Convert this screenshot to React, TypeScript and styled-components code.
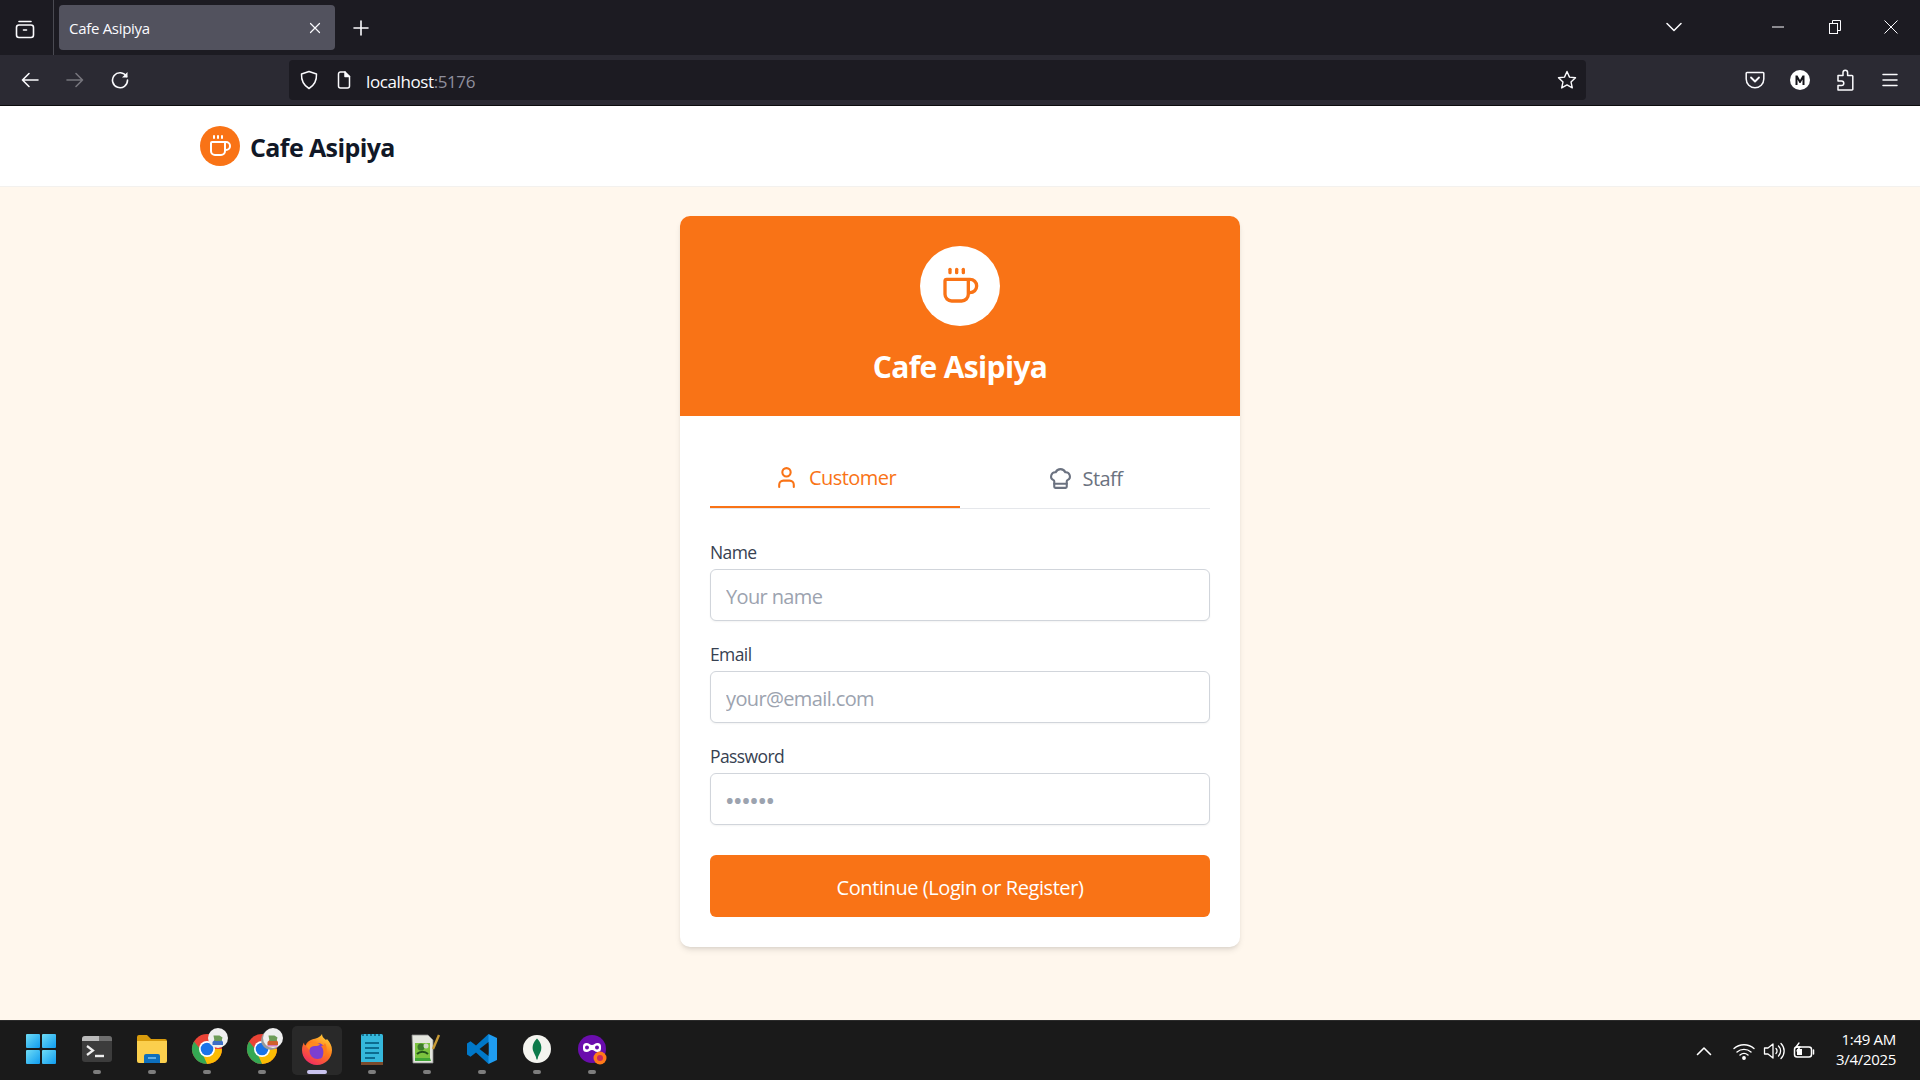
import { createGlobalStyle, styled } from "styled-components";
import { ChefHat, Coffee, User } from "lucide-react";

const GlobalStyle = createGlobalStyle`
  html, body {
    margin: 0;
    padding: 0;
    overflow: hidden;
  }
  body {
    font-family: "Open Sans", "Noto Sans", "Liberation Sans", sans-serif;
  }
  * {
    box-sizing: border-box;
  }
`;

const Screen = styled.div`
  width: 1920px;
  height: 1080px;
  display: flex;
  flex-direction: column;
  background: #fff7ed;
`;

/* browser chrome */
const TabStrip = styled.div`
  height: 55px;
  background: #1c1b22;
  display: flex;
  align-items: stretch;
  color: #fbfbfe;
`;

const TabManager = styled.div`
  width: 54px;
  border-right: 1px solid #4a4a52;
  display: flex;
  align-items: center;
  justify-content: center;
  padding: 2px 3px 0 0;
`;

const Tab = styled.div`
  width: 276px;
  height: 45px;
  margin: 5px 0 0 5px;
  padding: 1px 14px 0 10px;
  border-radius: 4px;
  background: #52525e;
  display: flex;
  align-items: center;
  justify-content: space-between;
  font-size: 15px;
  letter-spacing: -0.3px;
`;

const NewTab = styled.div`
  width: 52px;
  display: flex;
  align-items: center;
  justify-content: center;
`;

const StripSpacer = styled.div`
  flex: 1;
`;

const WindowGap = styled.div`
  width: 45px;
`;

const WindowButton = styled.div<{ $w: number }>`
  width: ${(p) => p.$w}px;
  display: flex;
  align-items: center;
  justify-content: center;
  padding-bottom: 1px;
`;

const Toolbar = styled.div`
  height: 51px;
  background: #2b2a33;
  border-bottom: 1px solid #0c0c0d;
  display: flex;
  align-items: center;
  padding: 0 7px;
  color: #fbfbfe;
`;

const ToolButton = styled.div<{ $dim?: boolean }>`
  width: 45px;
  display: flex;
  align-items: center;
  justify-content: center;
  color: ${(p) => (p.$dim ? "#76757c" : "#fbfbfe")};
`;

const UrlBar = styled.div`
  width: 1297px;
  height: 40px;
  margin: 0 146px 0 147px;
  padding: 0 9px 0 10px;
  border-radius: 4px;
  background: #1c1b22;
  display: flex;
  align-items: center;
  gap: 16px;
`;

const UrlText = styled.div`
  flex: 1;
  margin-left: -3px;
  padding-top: 3px;
  font-size: 17px;
  letter-spacing: -0.4px;
  color: #fbfbfe;
  span {
    color: #8f8f9d;
  }
`;

/* page */
const TopBar = styled.header`
  height: 81px;
  flex-shrink: 0;
  background: #fff;
  border-bottom: 1px solid #f3f1ee;
  padding-left: 200px;
  display: flex;
  align-items: center;
  gap: 10px;
`;

const BrandDot = styled.div`
  width: 40px;
  height: 40px;
  border-radius: 50%;
  background: #f97316;
  color: #fff;
  display: flex;
  align-items: center;
  justify-content: center;
`;

const BrandName = styled.div`
  padding-top: 2px;
  font-size: 25px;
  font-weight: 700;
  letter-spacing: -0.6px;
  color: #111827;
`;

const Main = styled.main`
  flex: 1;
  display: flex;
  justify-content: center;
  align-items: flex-start;
  padding-top: 29px;
`;

const Card = styled.div`
  width: 560px;
  border-radius: 10px;
  background: #fff;
  box-shadow: 0 4px 6px -1px rgba(0, 0, 0, 0.1), 0 2px 4px -2px rgba(0, 0, 0, 0.1);
  overflow: hidden;
`;

const Banner = styled.div`
  height: 200px;
  background: #f97316;
  padding-top: 30px;
  display: flex;
  flex-direction: column;
  align-items: center;
  gap: 21px;
`;

const BannerDot = styled.div`
  width: 80px;
  height: 80px;
  border-radius: 50%;
  background: #fff;
  color: #f97316;
  display: flex;
  align-items: center;
  justify-content: center;
`;

const BannerTitle = styled.h1`
  margin: 0;
  font-size: 30px;
  line-height: 40px;
  font-weight: 700;
  letter-spacing: -0.66px;
  color: #fff;
`;

const CardBody = styled.div`
  padding: 30px;
`;

const Tabs = styled.div`
  display: flex;
  height: 63px;
  border-bottom: 1px solid #e5e7eb;
  margin-bottom: 30px;
`;

const TabButton = styled.div<{ $active?: boolean }>`
  flex: 1;
  height: 62px;
  display: flex;
  align-items: center;
  justify-content: center;
  gap: 10px;
  padding-top: 2px;
  font-size: 20px;
  letter-spacing: -0.55px;
  color: ${(p) => (p.$active ? "#f97316" : "#6b7280")};
  border-bottom: ${(p) => (p.$active ? "2px solid #f97316" : "none")};
`;

const Field = styled.div`
  margin-bottom: 20px;
`;

const Label = styled.label`
  display: block;
  height: 26px;
  margin-bottom: 4px;
  font-size: 17.5px;
  line-height: 26px;
  letter-spacing: -0.6px;
  color: #374151;
`;

const Input = styled.input`
  display: block;
  width: 100%;
  height: 52px;
  padding: 2px 15px 0;
  border: 1px solid #d1d5db;
  border-radius: 6px;
  box-shadow: 0 1px 2px rgba(0, 0, 0, 0.05);
  background: #fff;
  font-family: inherit;
  font-size: 20px;
  letter-spacing: -0.63px;
  outline: none;
  &::placeholder {
    color: #9ca3af;
    opacity: 1;
  }
`;

const PasswordInput = styled(Input)`
  letter-spacing: 0.6px;
  &::placeholder {
    font-weight: 700;
  }
`;

const Submit = styled.button`
  display: block;
  width: 100%;
  height: 62px;
  margin-top: 30px;
  padding-top: 3px;
  border: none;
  border-radius: 6px;
  background: #f97316;
  color: #fff;
  font-family: inherit;
  font-size: 20px;
  letter-spacing: -0.42px;
`;

/* windows taskbar */
const Taskbar = styled.div`
  height: 60px;
  flex-shrink: 0;
  background: #1a1a1a;
  border-top: 1px solid #2b2b2b;
  display: flex;
  align-items: center;
  padding-left: 13px;
  color: #fff;
`;

const TaskCell = styled.div<{ $active?: boolean; $first?: boolean }>`
  width: ${(p) => (p.$active ? 50 : 55)}px;
  height: 49px;
  margin: 0 ${(p) => (p.$first ? 1 : p.$active ? 2.5 : 0)}px 0 ${(p) => (p.$active ? 2.5 : 0)}px;
  border-radius: 5px;
  position: relative;
  display: flex;
  align-items: center;
  justify-content: center;
  padding-bottom: 4px;
  background: ${(p) => (p.$active ? "#292929" : "transparent")};
  svg {
    overflow: visible;
  }
`;

const TaskDot = styled.span<{ $active?: boolean }>`
  position: absolute;
  bottom: 1px;
  left: 50%;
  transform: translateX(-50%);
  width: ${(p) => (p.$active ? 20 : 8)}px;
  height: 4px;
  border-radius: 2px;
  background: ${(p) => (p.$active ? "#c9c3ef" : "#7d7d7d")};
`;

const Tray = styled.div`
  margin-left: auto;
  display: flex;
  align-items: center;
`;

const TrayIcon = styled.div<{ $gap?: number }>`
  width: 30px;
  margin-left: ${(p) => p.$gap ?? 0}px;
  display: flex;
  align-items: center;
  justify-content: center;
`;

const Clock = styled.div`
  margin: 0 24px 4px 15px;
  width: 62px;
  text-align: right;
  white-space: nowrap;
  font-size: 15px;
  line-height: 20px;
  letter-spacing: -0.3px;
`;

const iconProps = {
  fill: "none",
  stroke: "currentColor",
  strokeLinecap: "round" as const,
  strokeLinejoin: "round" as const,
};

function TaskIcon({ name }: { name: string }) {
  switch (name) {
    case "start":
      return (
        <svg width="32" height="30" viewBox="0 0 32 30">
          <defs>
            <linearGradient id="win" x1="0" y1="0" x2="1" y2="1">
              <stop offset="0" stopColor="#6fdcf5" />
              <stop offset="1" stopColor="#0f9cf0" />
            </linearGradient>
          </defs>
          <rect x="1" y="0" width="14" height="14" rx="1" fill="url(#win)" />
          <rect x="17" y="0" width="14" height="14" rx="1" fill="url(#win)" />
          <rect x="1" y="16" width="14" height="14" rx="1" fill="url(#win)" />
          <rect x="17" y="16" width="14" height="14" rx="1" fill="url(#win)" />
        </svg>
      );
    case "terminal":
      return (
        <svg width="30" height="28" viewBox="0 0 30 28">
          <rect x="0" y="1" width="30" height="26" rx="3" fill="#3c3c3c" />
          <path d="M3 1h14v5H0V4a3 3 0 0 1 3-3z" fill="#b9b9b9" />
          <path d="M17 1h10a3 3 0 0 1 3 3v2H17z" fill="#6e6e6e" />
          <path d="M5 11l6 4.500-6 4.500" fill="none" stroke="#eee" strokeWidth="2.200" />
          <path d="M13 21h9" stroke="#eee" strokeWidth="2.400" />
        </svg>
      );
    case "folder":
      return (
        <svg width="30" height="28" viewBox="0 0 30 28">
          <path d="M0 2a2 2 0 0 1 2-2h8l4 4h14a2 2 0 0 1 2 2v4H0z" fill="#d89b0c" />
          <path d="M0 6h30v20a2 2 0 0 1-2 2H2a2 2 0 0 1-2-2z" fill="#fbcf4d" />
          <path d="M7 21a2 2 0 0 1 2-2h12a2 2 0 0 1 2 2v7H7z" fill="#0d6fbd" />
          <path d="M11 23h8" stroke="#7cc4f5" strokeWidth="1.500" />
        </svg>
      );
    case "chromeA":
    case "chromeB":
      return (
        <svg width="30" height="30" viewBox="0 0 30 30">
          <circle cx="15" cy="15" r="15" fill="#ea4335" />
          <path d="M15 15h15a15 15 0 0 1-15 15l-5-8z" fill="#fbbc04" />
          <path d="M15 30A15 15 0 0 1 2 7.500L9 16l6 14z" fill="#34a853" />
          <circle cx="15" cy="15" r="8" fill="#fff" />
          <circle cx="15" cy="15" r="6.300" fill="#1a73e8" />
          {name === "chromeB" && <circle cx="24" cy="6" r="10" fill="#9a9a9a" />}
          <circle cx="26" cy="4" r="10" fill="#efefef" />
          <path
            d="M20.500 11v-3l2-2h7l1.500 2v3z"
            fill={name === "chromeA" ? "#3f6fc5" : "#d0602c"}
          />
          {name === "chromeB" && <path d="M20.500 11h10v1.500h-10z" fill="#d77bb8" />}
          <path d="M21.500 1.500h6l3 2-1 3.500h-7z" fill="#6d9c58" />
        </svg>
      );
    case "firefox":
      return (
        <svg width="30" height="32" viewBox="0 0 30 32">
          <defs>
            <linearGradient id="fx" x1="0.8" y1="0" x2="0.2" y2="1">
              <stop offset="0" stopColor="#ffd43a" />
              <stop offset="0.45" stopColor="#ff7a1a" />
              <stop offset="1" stopColor="#f0246a" />
            </linearGradient>
          </defs>
          <path
            d="M20 1c0 3 2 4 4 6l1-1c3 3 5 7 5 11 0 8-6.500 15-15 15S0 25 0 17c0-3 .8-5.500 2-7.500 0 1.500.5 2.500 1.500 3 1-3 3.500-5 6.500-6 4-1 8-2 10-5.500z"
            fill="url(#fx)"
          />
          <circle cx="15.500" cy="18" r="8" fill="#7b3fd0" />
          <path d="M4 13c3-4 10-5 14-1.500-1 1.500-3 1.500-5 1.500-3 0-5 1-6 4-1-2-2-3-3-4z" fill="#ff8a1f" />
          <path d="M23 10c3 5 2 12-3 15 2-4 2-9-1-12 2 0 3-1 4-3z" fill="#ff7a1a" />
        </svg>
      );
    case "notepad":
      return (
        <svg width="24" height="32" viewBox="0 0 24 32">
          <rect x="1" y="1" width="22" height="30" rx="1.500" fill="#35b8dc" />
          <rect x="1" y="29" width="22" height="3" fill="#7b4a2b" />
          <path d="M3 1v2M7 1v2M11 1v2M15 1v2M19 1v2" stroke="#0f5f7c" strokeWidth="1.600" />
          <path d="M5 10h14M5 15h14M5 20h14M5 25h10" stroke="#0d6c8f" strokeWidth="2.200" />
        </svg>
      );
    case "npp":
      return (
        <svg width="30" height="30" viewBox="0 0 30 30">
          <path d="M0 1h16l5 5v23H1z" fill="#e4e6de" stroke="#8a8a8a" strokeWidth="0.800" />
          <path d="M3 9h15v15H3z" fill="#7cc33f" />
          <path d="M3 24h15l1 3H3z" fill="#3fa535" />
          <circle cx="9" cy="13" r="3.500" fill="#3c7a2a" />
          <circle cx="14" cy="12" r="2.500" fill="#cfd8c4" />
          <path d="M5 20c3-3 8-3 11 0" stroke="#21501a" strokeWidth="2" fill="none" />
          <path d="M21 15L27 1" stroke="#c89a35" strokeWidth="2.400" />
        </svg>
      );
    case "vscode":
      return (
        <svg width="30" height="30" viewBox="0 0 30 30">
          <path d="M21.500 0L9 11.500 3.500 7.200 0 9.500v11l3.500 2.300L9 18.500 21.500 30l3-8L15 15l9.500-7z" fill="#0078c9" />
          <path d="M21.500 0L30 4v22l-8.500 4z" fill="#1f9cf0" />
          <path d="M21.500 8L12.500 15l9 7z" fill="#1a1a1a" />
        </svg>
      );
    case "mongo":
      return (
        <svg width="28" height="28" viewBox="0 0 28 28">
          <circle cx="14" cy="14" r="14" fill="#f4f4ef" />
          <path d="M14 3.500c4 4 5 8 4 12-.8 3-3 5-3.500 9h-1c-.5-4-2.700-6-3.500-9-1-4 0-8 4-12z" fill="#0d7a4a" />
        </svg>
      );
    case "proxy":
      return (
        <svg width="28" height="28" viewBox="0 0 28 28">
          <circle cx="14" cy="14" r="14" fill="#6a0dad" />
          <path
            d="M5 11.500a3.500 3.500 0 0 1 3.500-3.500c2.500 0 3.500 2 5.500 2s3-2 5.500-2a3.500 3.500 0 0 1 3.500 3.500v2a3.500 3.500 0 0 1-3.500 3.500c-2.500 0-3.500-2-5.500-2s-3 2-5.500 2A3.500 3.500 0 0 1 5 13.500z"
            fill="#fff"
          />
          <circle cx="9" cy="12.500" r="2" fill="#6a0dad" />
          <circle cx="19" cy="12.500" r="2" fill="#6a0dad" />
          <circle cx="22" cy="23" r="6.500" fill="#ff7a1a" />
          <circle cx="22" cy="23" r="3" fill="#c9285e" />
        </svg>
      );
    default:
      return null;
  }
}

const taskApps = ["start", "terminal", "folder", "chromeA", "chromeB", "firefox", "notepad", "npp", "vscode", "mongo", "proxy"];

export default function App() {
  return (
    <Screen>
      <GlobalStyle />
      <TabStrip>
        <TabManager>
          <svg width="20" height="20" viewBox="0 0 20 20" {...iconProps} strokeWidth="1.600">
            <path d="M4 2.500h12" />
            <rect x="1.500" y="6" width="17" height="12.500" rx="2.500" />
            <path d="M8.500 11h3" />
          </svg>
        </TabManager>
        <Tab>
          Cafe Asipiya
          <svg width="12" height="12" viewBox="0 0 12 12" {...iconProps} strokeWidth="1.200">
            <path d="M1.500 1.500l9 9M10.500 1.500l-9 9" />
          </svg>
        </Tab>
        <NewTab>
          <svg width="16" height="16" viewBox="0 0 16 16" {...iconProps} strokeWidth="1.600">
            <path d="M8 1v14M1 8h14" />
          </svg>
        </NewTab>
        <StripSpacer />
        <WindowButton $w={60}>
          <svg width="16" height="10" viewBox="0 0 16 10" {...iconProps} strokeWidth="1.500">
            <path d="M1 1.500l7 7 7-7" />
          </svg>
        </WindowButton>
        <WindowGap />
        <WindowButton $w={58}>
          <svg width="12" height="2" viewBox="0 0 12 2">
            <path d="M0 1h12" stroke="#fbfbfe" />
          </svg>
        </WindowButton>
        <WindowButton $w={55}>
          <svg width="12" height="14" viewBox="0 0 12 14" fill="none" stroke="#fbfbfe">
            <rect x="0.500" y="3.500" width="8" height="10" />
            <path d="M3.500 3.500V0.500h8v10h-3" />
          </svg>
        </WindowButton>
        <WindowButton $w={58}>
          <svg width="14" height="14" viewBox="0 0 14 14" stroke="#fbfbfe">
            <path d="M0.500 0.500l13 13M13.500 0.500l-13 13" />
          </svg>
        </WindowButton>
      </TabStrip>

      <Toolbar>
        <ToolButton>
          <svg width="18" height="16" viewBox="0 0 18 16" {...iconProps} strokeWidth="1.600">
            <path d="M17 8H1.500M8 1.500L1.500 8 8 14.500" />
          </svg>
        </ToolButton>
        <ToolButton $dim>
          <svg width="18" height="16" viewBox="0 0 18 16" {...iconProps} strokeWidth="1.600">
            <path d="M1 8h15.500M10 1.500L16.500 8 10 14.500" />
          </svg>
        </ToolButton>
        <ToolButton>
          <svg width="18" height="18" viewBox="0 0 18 18" {...iconProps} strokeWidth="1.600">
            <path d="M15.500 5.500A7.500 7.500 0 1 0 16.500 9" />
            <path d="M16.500 1v5.500H11z" fill="currentColor" stroke="none" />
          </svg>
        </ToolButton>
        <UrlBar>
          <svg width="20" height="20" viewBox="0 0 20 20" {...iconProps} strokeWidth="1.500">
            <path d="M10 1.500l7.500 2.500c.3 6-1.700 11-7.500 14.500C4.200 15 2.200 10 2.500 4z" />
          </svg>
          <svg width="18" height="18" viewBox="0 0 18 18" {...iconProps} strokeWidth="1.500">
            <path d="M3.500 3a2 2 0 0 1 2-2H10l4.500 4.500V15a2 2 0 0 1-2 2h-7a2 2 0 0 1-2-2z" />
            <path d="M10 1v4.500h4.500" fill="currentColor" />
          </svg>
          <UrlText>
            localhost<span>:5176</span>
          </UrlText>
          <svg width="20" height="20" viewBox="0 0 20 20" {...iconProps} strokeWidth="1.400">
            <path d="M10 1.500l2.500 5.600 6 .7-4.500 4.100 1.300 6L10 14.900l-5.300 3 1.300-6-4.500-4.100 6-.7z" />
          </svg>
        </UrlBar>
        <ToolButton>
          <svg width="20" height="20" viewBox="0 0 20 20" {...iconProps} strokeWidth="1.500">
            <path d="M2 2.500h16a.8.800 0 0 1 .8.800V9a8.800 8.800 0 0 1-17.600 0V3.300a.8.800 0 0 1 .8-.8z" />
            <path d="M6 7.500l4 4 4-4" strokeWidth="1.800" />
          </svg>
        </ToolButton>
        <ToolButton>
          <svg width="20" height="20" viewBox="0 0 20 20">
            <circle cx="10" cy="10" r="10" fill="#fff" />
            <path d="M5.500 15V5.500h2L10 10l2.500-4.500h2V15h-2V9.500L10.500 13h-1L7.500 9.500V15z" fill="#15141a" />
          </svg>
        </ToolButton>
        <ToolButton>
          <svg width="18" height="22" viewBox="0 0 18 22" {...iconProps} strokeWidth="1.500">
            <path d="M7 6.500V3.500a2.300 2.300 0 0 1 4.600 0v3h4.400a.8.800 0 0 1 .8.800v12.900a.8.800 0 0 1-.8.800H2v-4.500h3.500a2.300 2.300 0 0 0 0-4.600H2V6.500z" />
          </svg>
        </ToolButton>
        <ToolButton>
          <svg width="16" height="14" viewBox="0 0 16 14" {...iconProps} strokeWidth="1.500">
            <path d="M1 1.500h14M1 7h14M1 12.500h14" />
          </svg>
        </ToolButton>
      </Toolbar>

      <TopBar>
        <BrandDot>
          <Coffee size={24} strokeWidth={2} />
        </BrandDot>
        <BrandName>Cafe Asipiya</BrandName>
      </TopBar>

      <Main>
        <Card>
          <Banner>
            <BannerDot>
              <Coffee size={40} strokeWidth={2} />
            </BannerDot>
            <BannerTitle>Cafe Asipiya</BannerTitle>
          </Banner>
          <CardBody>
            <Tabs>
              <TabButton $active>
                <User size={25} strokeWidth={2} />
                Customer
              </TabButton>
              <TabButton>
                <ChefHat size={25} strokeWidth={2} />
                Staff
              </TabButton>
            </Tabs>
            <Field>
              <Label>Name</Label>
              <Input type="text" placeholder="Your name" />
            </Field>
            <Field>
              <Label>Email</Label>
              <Input type="email" placeholder="your@email.com" />
            </Field>
            <Field>
              <Label>Password</Label>
              <PasswordInput type="password" placeholder="••••••" />
            </Field>
            <Submit>Continue (Login or Register)</Submit>
          </CardBody>
        </Card>
      </Main>

      <Taskbar>
        {taskApps.map((name, i) => (
          <TaskCell key={name} $first={i === 0} $active={name === "firefox"}>
            <TaskIcon name={name} />
            {i > 0 && <TaskDot $active={name === "firefox"} />}
          </TaskCell>
        ))}
        <Tray>
          <TrayIcon>
            <svg width="16" height="10" viewBox="0 0 16 10" {...iconProps} strokeWidth="1.600">
              <path d="M1.500 8.500L8 2l6.500 6.500" />
            </svg>
          </TrayIcon>
          <TrayIcon $gap={10}>
            <svg width="22" height="18" viewBox="0 0 22 18" {...iconProps} strokeWidth="1.400">
              <path d="M1 6.500c5.500-5 14.500-5 20 0M4 10c4-3.500 10-3.500 14 0M7 13c2.500-2 5.500-2 8 0" />
              <circle cx="11" cy="16" r="1.200" fill="currentColor" />
            </svg>
          </TrayIcon>
          <TrayIcon>
            <svg width="22" height="20" viewBox="0 0 22 20" {...iconProps} strokeWidth="1.300">
              <path d="M1.500 7v6h3.500l5 4V3L5 7z" />
              <path d="M13 7.500a3.500 3.500 0 0 1 0 5M15.500 5a7 7 0 0 1 0 10M18 2.500a10.500 10.500 0 0 1 0 15" />
            </svg>
          </TrayIcon>
          <TrayIcon>
            <svg width="22" height="18" viewBox="0 0 22 18" {...iconProps} strokeWidth="1.500">
              <rect x="1.500" y="5" width="17" height="10" rx="2.500" />
              <path d="M20.500 8v4" />
              <path d="M4 7h5v6H4z" fill="currentColor" stroke="none" />
              <path d="M6 1L3 5h4l-3 4" strokeWidth="1.300" />
            </svg>
          </TrayIcon>
          <Clock>
            1:49 AM
            <br />
            3/4/2025
          </Clock>
        </Tray>
      </Taskbar>
    </Screen>
  );
}
